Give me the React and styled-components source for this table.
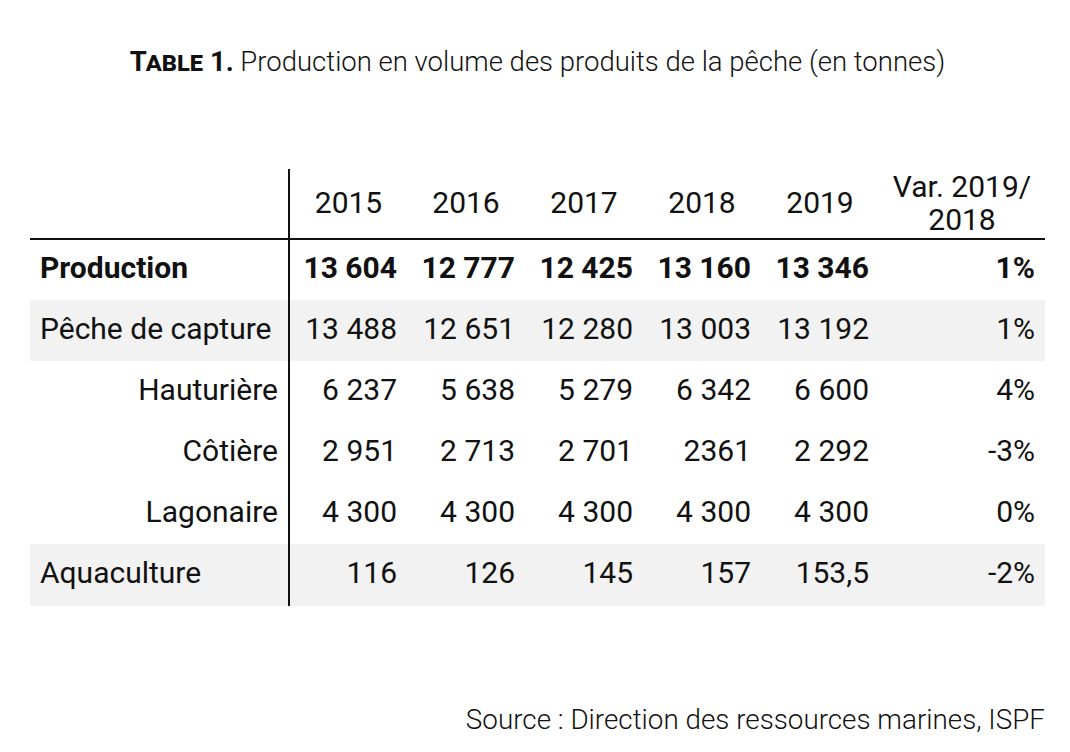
import styled, { createGlobalStyle } from 'styled-components'

const rows = [
  { label: 'Production', values: ['13 604', '12 777', '12 425', '13 160', '13 346'], variation: '1%', bold: true },
  { label: 'Pêche de capture', values: ['13 488', '12 651', '12 280', '13 003', '13 192'], variation: '1%', shaded: true },
  { label: 'Hauturière', values: ['6 237', '5 638', '5 279', '6 342', '6 600'], variation: '4%', indent: true },
  { label: 'Côtière', values: ['2 951', '2 713', '2 701', '2361', '2 292'], variation: '-3%', indent: true },
  { label: 'Lagonaire', values: ['4 300', '4 300', '4 300', '4 300', '4 300'], variation: '0%', indent: true },
  { label: 'Aquaculture', values: ['116', '126', '145', '157', '153,5'], variation: '-2%', shaded: true },
]

const years = ['2015', '2016', '2017', '2018', '2019']

const App = () => {
  return (
    <>
      <GlobalStyle />
      <Page>
        <Caption>
          <Label>Table 1.</Label> Production en volume des produits de la pêche (en tonnes)
        </Caption>
        <Table>
          <colgroup>
            <col style={{ width: 259 }} />
            {years.map((y) => (
              <col key={y} style={{ width: 118 }} />
            ))}
            <col style={{ width: 166 }} />
          </colgroup>
          <thead>
            <tr>
              <HeadCell $first />
              {years.map((y) => (
                <HeadCell key={y}>{y}</HeadCell>
              ))}
              <HeadCell>
                Var. 2019/
                <br />
                2018
              </HeadCell>
            </tr>
          </thead>
          <tbody>
            {rows.map((row) => (
              <Row key={row.label} $shaded={row.shaded} $bold={row.bold}>
                <LabelCell $indent={row.indent}>{row.label}</LabelCell>
                {row.values.map((v, i) => (
                  <Cell key={i}>{v}</Cell>
                ))}
                <Cell>{row.variation}</Cell>
              </Row>
            ))}
          </tbody>
        </Table>
        <Source>Source : Direction des ressources marines, ISPF</Source>
      </Page>
    </>
  )
}

export default App

const GlobalStyle = createGlobalStyle`
  html, body {
    margin: 0;
    padding: 0;
    background: #ffffff;
  }
  body {
    font-family: Roboto, "Noto Sans", sans-serif;
    color: #111111;
  }
`

const Page = styled.div`
  width: 1070px;
  height: 752px;
  padding: 46px 25px 0 30px;
  box-sizing: border-box;
  display: flex;
  flex-direction: column;
`

const Caption = styled.div`
  font-size: 27.5px;
  line-height: 32px;
  font-weight: 300;
  text-align: center;
`

const Label = styled.span`
  font-weight: 700;
  font-variant: small-caps;
`

const Table = styled.table`
  margin-top: 91px;
  width: 1015px;
  table-layout: fixed;
  border-collapse: collapse;
  font-size: 30px;
`

const HeadCell = styled.th`
  height: 70px;
  padding: 0 10px 2px;
  box-sizing: border-box;
  font-weight: 400;
  line-height: 33px;
  text-align: center;
  vertical-align: middle;
  border-bottom: 2px solid #111111;
  border-right: ${(p) => (p.$first ? '2px solid #111111' : 'none')};
`

const Row = styled.tr`
  height: 61.1px;
  background: ${(p) => (p.$shaded ? '#f2f2f2' : 'transparent')};
  font-weight: ${(p) => (p.$bold ? 700 : 400)};
`

const LabelCell = styled.td`
  padding: 0 10px 5px;
  text-align: ${(p) => (p.$indent ? 'right' : 'left')};
  vertical-align: middle;
  border-right: 2px solid #111111;
  white-space: nowrap;
`

const Cell = styled.td`
  padding: 0 10px 5px;
  text-align: right;
  vertical-align: middle;
  white-space: nowrap;
`

const Source = styled.div`
  margin-top: auto;
  margin-bottom: 16px;
  width: 1015px;
  text-align: right;
  font-size: 27.8px;
  line-height: 32px;
  font-weight: 300;
`
